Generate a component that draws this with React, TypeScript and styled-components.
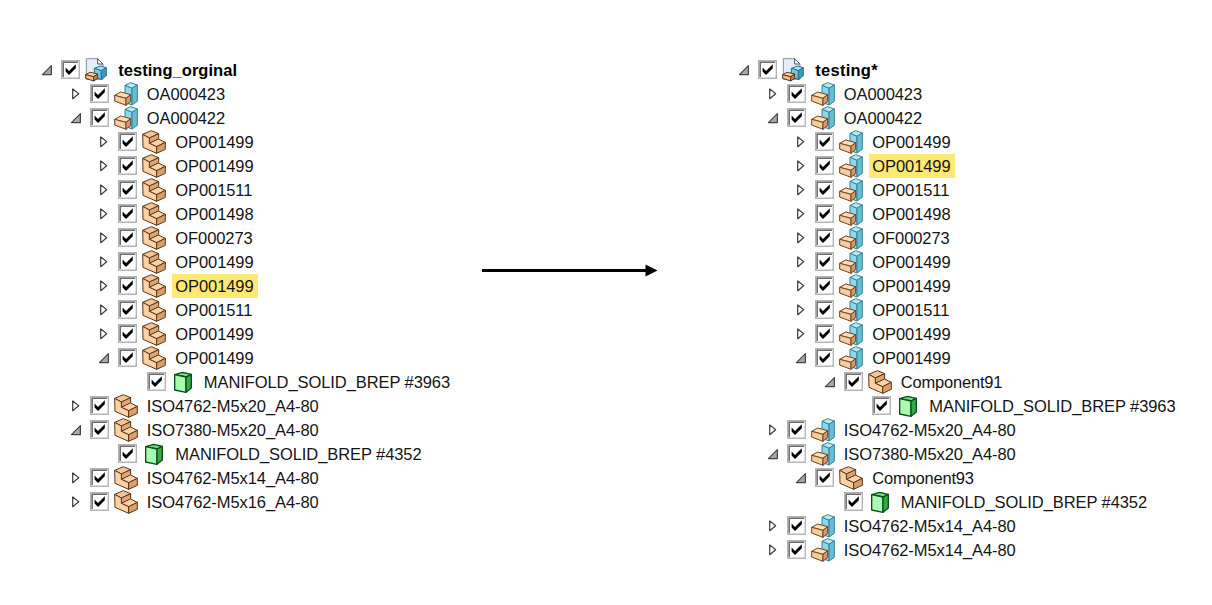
import React from 'react';
import styled, { createGlobalStyle } from 'styled-components';

type IconKind = 'document' | 'assembly' | 'part' | 'solid';
type Toggle = 'open' | 'closed' | 'none';

interface Node {
  level: number;
  toggle: Toggle;
  icon: IconKind;
  text: string;
  marked?: boolean;
  bold?: boolean;
  tracking?: number;
}

const GlobalStyle = createGlobalStyle`
  body {
    margin: 0;
    background: #fff;
  }
`;

const Page = styled.main`
  display: grid;
  grid-template-columns: 441px 256px 1fr;
  box-sizing: border-box;
  width: 1212px;
  height: 605px;
  padding: 58px 0 0 41px;
  overflow: hidden;
  background: #fff;
  color: #141414;
  font-family: 'Liberation Sans', Arial, sans-serif;
  font-size: 16.5px;
`;

const TreeList = styled.ul`
  margin: 0;
  padding: 0;
  list-style: none;
`;

const Row = styled.li<{ $level: number }>`
  display: flex;
  align-items: center;
  height: 24px;
  padding-left: ${(p) => p.$level * 28.5}px;
`;

const Expander = styled.span`
  display: flex;
  flex: 0 0 20px;
  height: 24px;
`;

const Checkbox = styled.span`
  box-sizing: border-box;
  display: flex;
  flex: 0 0 19px;
  height: 19px;
  margin: -1px 5px 0 0;
`;

const IconSlot = styled.span`
  display: flex;
  flex: 0 0 24px;
  height: 24px;
  margin: -1px 6.3px 0 0;
`;

const Label = styled.span<{ $marked?: boolean; $bold?: boolean; $tracking?: number }>`
  height: 24px;
  padding: 0 4px 0 3px;
  line-height: 24px;
  white-space: pre;
  background: ${(p) => (p.$marked ? '#ffe873' : 'transparent')};
  color: ${(p) => (p.$bold ? '#000' : 'inherit')};
  font-weight: ${(p) => (p.$bold ? 700 : 400)};
  letter-spacing: ${(p) => p.$tracking ?? -0.08}px;
`;

const ArrowCell = styled.div`
  padding-top: 206px;
  line-height: 0;
`;

const outline = { strokeLinejoin: 'round' as const, strokeWidth: 3 };

const AssemblyIcon = () => (
  <svg width="24" height="24" viewBox="0 0 72 72" {...outline}>
    <g stroke="#3a7f95">
      <path d="M33 10 50 2 70 9 54 19Z" fill="#b4ecfa" />
      <path d="M33 10 54 19V69L33 61Z" fill="#8ad9ee" />
      <path d="M54 19 70 9V58L54 69Z" fill="#66bdd8" />
    </g>
    <g stroke="#6b4526">
      <path d="M2 40 20 30 50 38 36 49Z" fill="#ffddb6" />
      <path d="M2 40 36 49V70L2 57Z" fill="#fccb9b" />
      <path d="M36 49 50 38V58L36 70Z" fill="#d39b6b" />
    </g>
  </svg>
);

const PartIcon = () => (
  <svg width="24" height="24" viewBox="0 0 72 72" {...outline} stroke="#5a3519">
    <path d="M2 13 28 2 50 11 22 24Z" fill="#f6c597" />
    <path d="M22 24 50 11V28L22 40Z" fill="#dda474" />
    <path d="M22 40 49 27 70 37 44 50Z" fill="#ffd5a8" />
    <path d="M2 13 22 24V40L44 50V70L3 52Z" fill="#ffd2a4" />
    <path d="M44 50 70 37V58L44 70Z" fill="#dc9d68" />
  </svg>
);

const SolidIcon = () => (
  <svg width="24" height="24" viewBox="0 0 72 72" {...outline} strokeWidth={4} stroke="#0c4d1b">
    <path d="M11 14 35 7 61 13 45 21Z" fill="#6fe07d" />
    <path d="M11 14 45 21V67L11 60Z" fill="#a6fbb0" />
    <path d="M45 21 61 13V54L45 67Z" fill="#36a944" />
  </svg>
);

const DocumentIcon = () => (
  <svg width="24" height="24" viewBox="0 0 72 72" {...outline}>
    <path d="M4 2H38L54 18V64H4Z" fill="#e6edf9" stroke="#848d9a" />
    <path d="M38 2V18H54Z" fill="#fff" stroke="#4d5560" />
    <g stroke="#286f86">
      <path d="M28 31 46 24 64 29 49 38Z" fill="#a4e6f8" />
      <path d="M28 31 49 38V64L28 57Z" fill="#74cbe6" />
      <path d="M49 38 64 29V53L49 64Z" fill="#3a9bbd" />
    </g>
    <g stroke="#5c3518">
      <path d="M2 50 15 43 38 48 26 56Z" fill="#ffd9ad" />
      <path d="M2 50 26 56V69L2 61Z" fill="#f6bd88" />
      <path d="M26 56 38 48V61L26 69Z" fill="#bd814f" />
    </g>
  </svg>
);

const icons: Record<IconKind, React.FC> = {
  document: DocumentIcon,
  assembly: AssemblyIcon,
  part: PartIcon,
  solid: SolidIcon,
};

const ToggleMark = ({ state }: { state: Toggle }) => (
  <svg width="20" height="24" viewBox="0 0 20 24" strokeLinejoin="round">
    {state === 'closed' && (
      <path d="M2.7 6.9V16.7L8.7 11.8Z" fill="#fff" stroke="#3c3c3c" strokeWidth="1.2" />
    )}
    {state === 'open' && (
      <path d="M10.4 7.6V16.6H1.4Z" fill="#a8a8a8" stroke="#454545" strokeWidth="1.2" />
    )}
  </svg>
);

const CheckMark = () => (
  <svg width="19" height="19" viewBox="0 0 19 19">
    <path d="M0.700 0.700H18.300V18.300H0.700Z" fill="#fff" stroke="#b4b4b4" strokeWidth="1.4" />
    <path d="M2.200 17V2.200H17" fill="none" stroke="#6c6c6c" strokeWidth="1.5" />
    <path d="M4.600 7.600 8 11 14.800 4.300V8.300L8 15 4.600 11.600Z" fill="#000" />
  </svg>
);

const Tree = ({ nodes }: { nodes: Node[] }) => (
  <TreeList>
    {nodes.map((n, i) => {
      const Icon = icons[n.icon];
      return (
        <Row key={i} $level={n.level}>
          <Expander>
            <ToggleMark state={n.toggle} />
          </Expander>
          <Checkbox>
            <CheckMark />
          </Checkbox>
          <IconSlot>
            <Icon />
          </IconSlot>
          <Label $marked={n.marked} $bold={n.bold} $tracking={n.tracking}>
            {n.text}
          </Label>
        </Row>
      );
    })}
  </TreeList>
);

const node = (
  level: number,
  toggle: Toggle,
  icon: IconKind,
  text: string,
  extra: Partial<Node> = {},
): Node => ({ level, toggle, icon, text, ...extra });

const original: Node[] = [
  node(0, 'open', 'document', 'testing_orginal', { bold: true, tracking: 0.03 }),
  node(1, 'closed', 'assembly', 'OA000423'),
  node(1, 'open', 'assembly', 'OA000422'),
  node(2, 'closed', 'part', 'OP001499'),
  node(2, 'closed', 'part', 'OP001499'),
  node(2, 'closed', 'part', 'OP001511'),
  node(2, 'closed', 'part', 'OP001498'),
  node(2, 'closed', 'part', 'OF000273'),
  node(2, 'closed', 'part', 'OP001499'),
  node(2, 'closed', 'part', 'OP001499', { marked: true }),
  node(2, 'closed', 'part', 'OP001511'),
  node(2, 'closed', 'part', 'OP001499'),
  node(2, 'open', 'part', 'OP001499'),
  node(3, 'none', 'solid', 'MANIFOLD_SOLID_BREP #3963'),
  node(1, 'closed', 'part', 'ISO4762-M5x20_A4-80'),
  node(1, 'open', 'part', 'ISO7380-M5x20_A4-80'),
  node(2, 'none', 'solid', 'MANIFOLD_SOLID_BREP #4352'),
  node(1, 'closed', 'part', 'ISO4762-M5x14_A4-80'),
  node(1, 'closed', 'part', 'ISO4762-M5x16_A4-80'),
];

const converted: Node[] = [
  node(0, 'open', 'document', 'testing*', { bold: true, tracking: 0.25 }),
  node(1, 'closed', 'assembly', 'OA000423'),
  node(1, 'open', 'assembly', 'OA000422'),
  node(2, 'closed', 'assembly', 'OP001499'),
  node(2, 'closed', 'assembly', 'OP001499', { marked: true }),
  node(2, 'closed', 'assembly', 'OP001511'),
  node(2, 'closed', 'assembly', 'OP001498'),
  node(2, 'closed', 'assembly', 'OF000273'),
  node(2, 'closed', 'assembly', 'OP001499'),
  node(2, 'closed', 'assembly', 'OP001499'),
  node(2, 'closed', 'assembly', 'OP001511'),
  node(2, 'closed', 'assembly', 'OP001499'),
  node(2, 'open', 'assembly', 'OP001499'),
  node(3, 'open', 'part', 'Component91', { tracking: -0.2 }),
  node(4, 'none', 'solid', 'MANIFOLD_SOLID_BREP #3963'),
  node(1, 'closed', 'assembly', 'ISO4762-M5x20_A4-80'),
  node(1, 'open', 'assembly', 'ISO7380-M5x20_A4-80'),
  node(2, 'open', 'part', 'Component93', { tracking: -0.2 }),
  node(3, 'none', 'solid', 'MANIFOLD_SOLID_BREP #4352'),
  node(1, 'closed', 'assembly', 'ISO4762-M5x14_A4-80'),
  node(1, 'closed', 'assembly', 'ISO4762-M5x14_A4-80'),
];

export default function App() {
  return (
    <>
      <GlobalStyle />
      <Page>
        <Tree nodes={original} />
        <ArrowCell>
          <svg width="176" height="13" viewBox="0 0 176 13">
            <path d="M0 5H164V8H0Z M163.500 0.500 175.500 6.500 163.500 12.500Z" fill="#000" />
          </svg>
        </ArrowCell>
        <Tree nodes={converted} />
      </Page>
    </>
  );
}
